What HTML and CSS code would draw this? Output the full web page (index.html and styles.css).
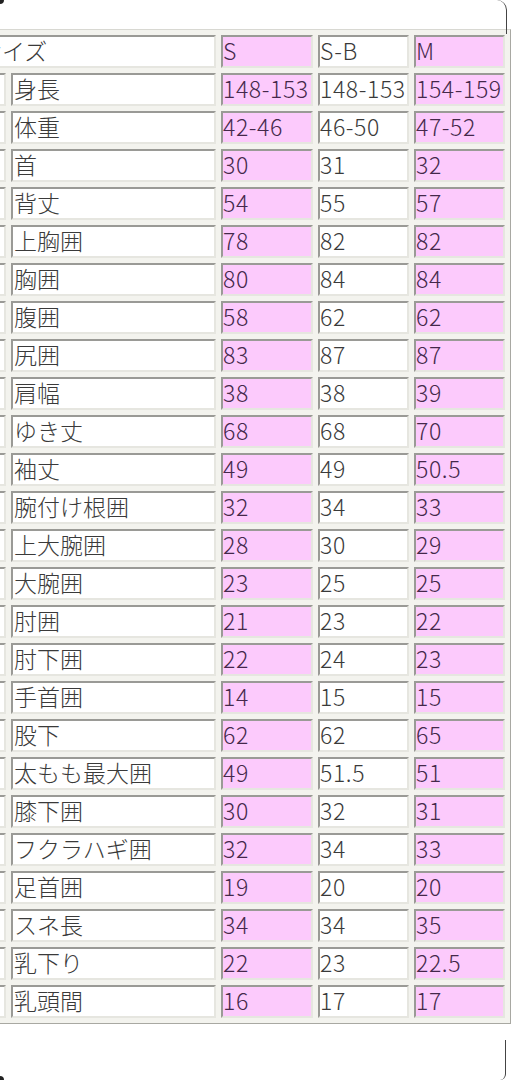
FILE: index.html
```html
<!DOCTYPE html>
<html lang="ja">
<head>
<meta charset="utf-8">
<link rel="stylesheet" href="styles.css">
</head>
<body>
<div class="frame">
  <div class="sheet">
    <div class="c lab span2">サイズ</div><div class="c pk">S</div><div class="c">S-B</div><div class="c pk">M</div>
    <div class="c"></div><div class="c lab">身長</div><div class="c pk">148-153</div><div class="c">148-153</div><div class="c pk">154-159</div>
    <div class="c"></div><div class="c lab">体重</div><div class="c pk">42-46</div><div class="c">46-50</div><div class="c pk">47-52</div>
    <div class="c"></div><div class="c lab">首</div><div class="c pk">30</div><div class="c">31</div><div class="c pk">32</div>
    <div class="c"></div><div class="c lab">背丈</div><div class="c pk">54</div><div class="c">55</div><div class="c pk">57</div>
    <div class="c"></div><div class="c lab">上胸囲</div><div class="c pk">78</div><div class="c">82</div><div class="c pk">82</div>
    <div class="c"></div><div class="c lab">胸囲</div><div class="c pk">80</div><div class="c">84</div><div class="c pk">84</div>
    <div class="c"></div><div class="c lab">腹囲</div><div class="c pk">58</div><div class="c">62</div><div class="c pk">62</div>
    <div class="c"></div><div class="c lab">尻囲</div><div class="c pk">83</div><div class="c">87</div><div class="c pk">87</div>
    <div class="c"></div><div class="c lab">肩幅</div><div class="c pk">38</div><div class="c">38</div><div class="c pk">39</div>
    <div class="c"></div><div class="c lab">ゆき丈</div><div class="c pk">68</div><div class="c">68</div><div class="c pk">70</div>
    <div class="c"></div><div class="c lab">袖丈</div><div class="c pk">49</div><div class="c">49</div><div class="c pk">50.5</div>
    <div class="c"></div><div class="c lab">腕付け根囲</div><div class="c pk">32</div><div class="c">34</div><div class="c pk">33</div>
    <div class="c"></div><div class="c lab">上大腕囲</div><div class="c pk">28</div><div class="c">30</div><div class="c pk">29</div>
    <div class="c"></div><div class="c lab">大腕囲</div><div class="c pk">23</div><div class="c">25</div><div class="c pk">25</div>
    <div class="c"></div><div class="c lab">肘囲</div><div class="c pk">21</div><div class="c">23</div><div class="c pk">22</div>
    <div class="c"></div><div class="c lab">肘下囲</div><div class="c pk">22</div><div class="c">24</div><div class="c pk">23</div>
    <div class="c"></div><div class="c lab">手首囲</div><div class="c pk">14</div><div class="c">15</div><div class="c pk">15</div>
    <div class="c"></div><div class="c lab">股下</div><div class="c pk">62</div><div class="c">62</div><div class="c pk">65</div>
    <div class="c"></div><div class="c lab">太もも最大囲</div><div class="c pk">49</div><div class="c">51.5</div><div class="c pk">51</div>
    <div class="c"></div><div class="c lab">膝下囲</div><div class="c pk">30</div><div class="c">32</div><div class="c pk">31</div>
    <div class="c"></div><div class="c lab">フクラハギ囲</div><div class="c pk">32</div><div class="c">34</div><div class="c pk">33</div>
    <div class="c"></div><div class="c lab">足首囲</div><div class="c pk">19</div><div class="c">20</div><div class="c pk">20</div>
    <div class="c"></div><div class="c lab">スネ長</div><div class="c pk">34</div><div class="c">34</div><div class="c pk">35</div>
    <div class="c"></div><div class="c lab">乳下り</div><div class="c pk">22</div><div class="c">23</div><div class="c pk">22.5</div>
    <div class="c"></div><div class="c lab">乳頭間</div><div class="c pk">16</div><div class="c">17</div><div class="c pk">17</div>
  </div>
  <div class="corner tl"></div>
  <div class="corner tr"></div>
  <div class="corner bl"></div>
  <div class="corner br"></div>
</div>
</body>
</html>
```

FILE: styles.css
```css
html, body {
  margin: 0;
  padding: 0;
  background: #ffffff;
}
body {
  width: 512px;
  height: 1080px;
  overflow: hidden;
  font-family: "Noto Sans CJK JP", "Noto Sans", sans-serif;
}
.frame {
  position: relative;
  width: 512px;
  height: 1080px;
  overflow: hidden;
}
.sheet {
  display: grid;
  grid-template-columns: 30px 205px 92px 91px 91px;
  grid-auto-rows: 33px;
  gap: 5px;
  padding: 5px;
  margin: 29px 0 0 -30px;
  width: max-content;
  background: #f3f3ee;
  border: 1px solid;
  border-color: #d8d8d2 #a8a8a2 #a8a8a2 #d8d8d2;
}
.c {
  box-sizing: border-box;
  display: flex;
  align-items: center;
  padding: 0 0 3px 0;
  background: #ffffff;
  border: 2px solid;
  border-color: #9a9a96 #e6e6e0 #e6e6e0 #9a9a96;
  font-size: 23px;
  font-weight: 300;
  line-height: 1;
  color: #3a3a3a;
  white-space: nowrap;
  letter-spacing: 0.6px;
}
.lab {
  padding-left: 1px;
  letter-spacing: 0;
}
.span2 {
  grid-column: span 2;
}
.pk {
  background: #fccafc;
  color: #44284a;
}
.corner {
  position: absolute;
  width: 10px;
  height: 34px;
}
.tl {
  top: -4px;
  left: -4px;
  width: 8px;
  height: 8px;
  border-radius: 50%;
  background: #222;
}
.bl {
  bottom: -4px;
  left: -4px;
  width: 8px;
  height: 8px;
  border-radius: 50%;
  background: #222;
}
.tr {
  top: 0;
  right: 5px;
  border-right: 1px solid #444;
  border-top-right-radius: 10px;
}
.br {
  bottom: 0;
  right: 6px;
  height: 40px;
  border-right: 1px solid #444;
  border-bottom-right-radius: 6px;
}
```
